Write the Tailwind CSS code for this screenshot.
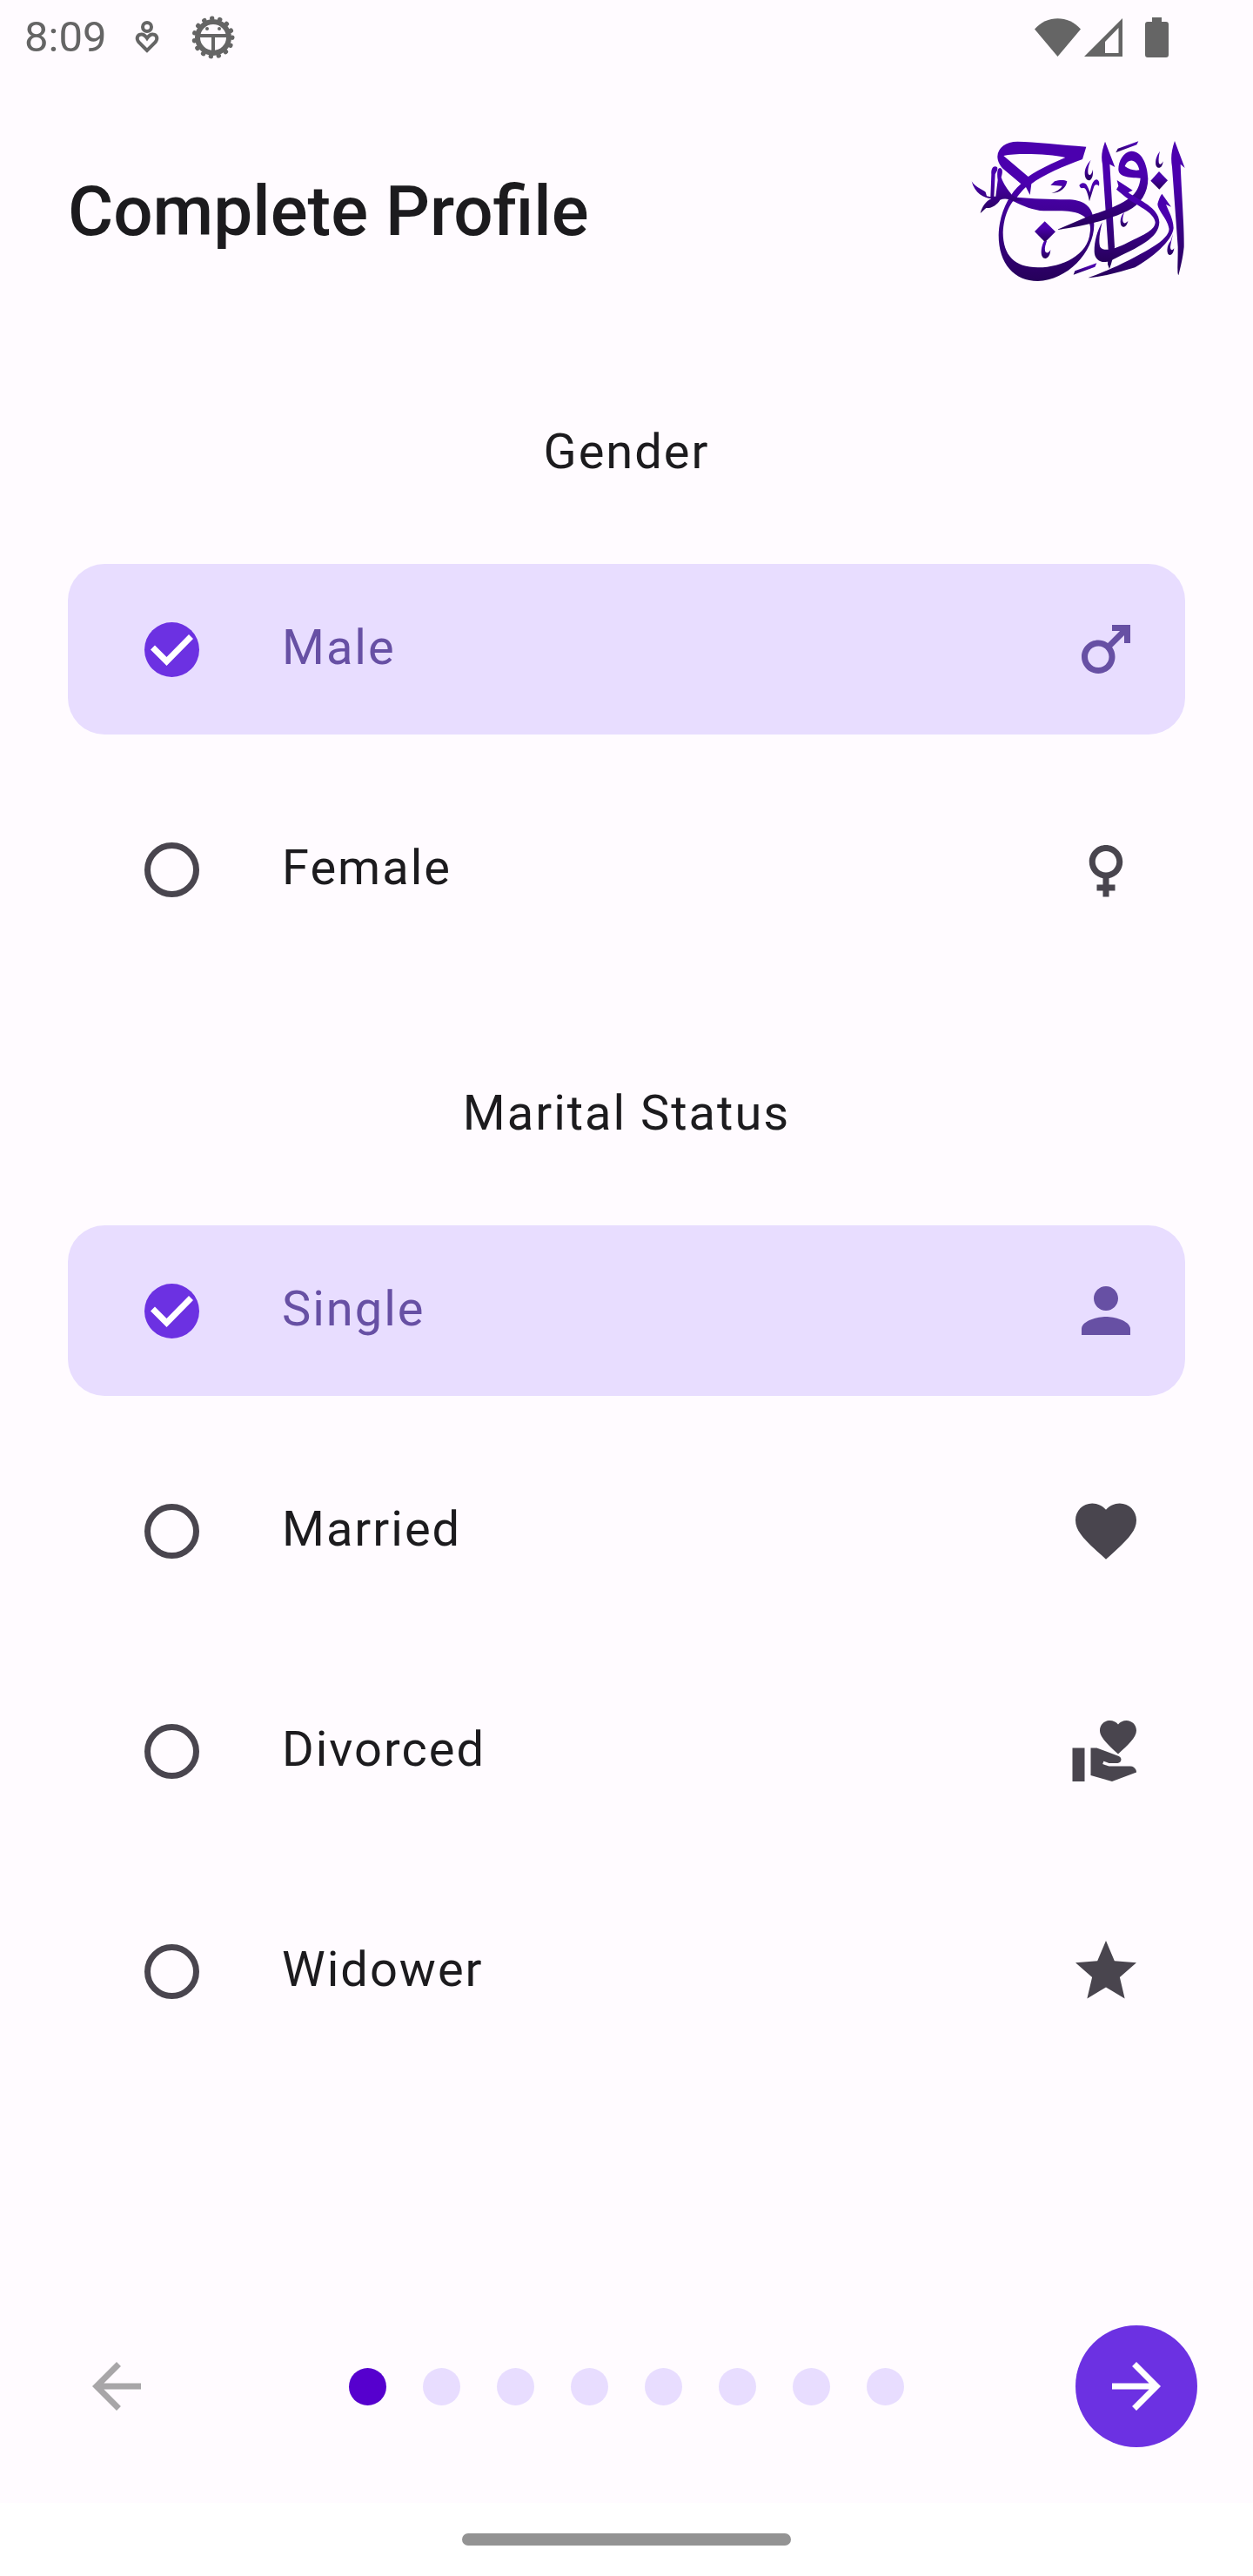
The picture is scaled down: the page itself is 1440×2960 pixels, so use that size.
<!DOCTYPE html>
<html lang="en">
<head>
<meta charset="utf-8">
<meta name="viewport" content="width=device-width, initial-scale=1">
<title>Complete Profile</title>
<script src="https://cdn.jsdelivr.net/npm/@tailwindcss/browser@4"></script>
</head>
<body class="flex min-h-screen flex-col bg-[#fffbff] font-[Roboto,sans-serif] text-[#1c1b1e]">

<!-- System status bar -->
<div class="flex h-[86px] items-center pr-[97px] pl-7 text-[#656565]">
  <span class="text-[49px] leading-[56px]">8:09</span>
  <svg class="ml-8 h-[42px] w-[30px]" viewBox="0 0 30 42" fill="none" stroke="currentColor" stroke-width="4" aria-hidden="true">
    <circle cx="15" cy="9" r="5"/>
    <path d="M15 36L5.500 26.500C2 22 4 18 8 17.500C11 17 13 19 15 22C17 19 19 17 22 17.500C26 18 28 22 24.500 26.500Z"/>
  </svg>
  <svg class="ml-9 size-[50px]" viewBox="0 0 50 50" aria-hidden="true">
    <circle cx="25" cy="25" r="18" fill="none" stroke="currentColor" stroke-width="6"/>
    <circle cx="25" cy="25" r="22" fill="none" stroke="currentColor" stroke-width="5" stroke-linecap="round" stroke-dasharray="0.500 8.715"/>
    <path d="M9 23h32M25 23v18" stroke="currentColor" stroke-width="4"/>
    <circle cx="18" cy="15" r="2" fill="currentColor"/><circle cx="32" cy="15" r="2" fill="currentColor"/>
  </svg>
  <svg class="ml-auto h-11 w-[53px]" viewBox="0 0 53 44" fill="currentColor" aria-hidden="true"><path d="M26.500 44L0 12.500C14-4 39-4 53 12.500Z"/></svg>
  <svg class="ml-1 size-11" viewBox="0 0 44 44" fill="currentColor" fill-rule="evenodd" aria-hidden="true"><path d="M44 0V44H0ZM39.500 11L24 27V40H39.500Z"/></svg>
  <svg class="ml-[26px] h-[46px] w-[27px]" viewBox="0 0 27 46" fill="currentColor" aria-hidden="true"><path d="M8 0H19V5H24Q27 5 27 8V43Q27 46 24 46H3Q0 46 0 43V8Q0 5 3 5H8Z"/></svg>
</div>

<header class="flex items-center justify-between px-[78px] pt-[76px]">
  <h1 class="text-[80px] leading-[96px] font-medium">Complete Profile</h1>
  <svg class="h-[162px] w-[246px]" viewBox="20 35 738 486" role="img" aria-label="ازدواج" fill="url(#ink)" fill-rule="evenodd">
    <defs><linearGradient id="ink" x1="0" y1="0" x2="0" y2="1"><stop offset="0.300" stop-color="#4b00ae"/><stop offset="1" stop-color="#26005a"/></linearGradient></defs>
    <!-- jeem with its bowl -->
    <path d="M417 55C330 48 240 38 180 37C140 37 112 58 111 88C111 105 120 122 135 135L192 183C148 220 116 290 115 360C115 460 170 518 250 518C350 515 443 420 444 325C443 260 410 237 350 237C290 236 230 234 178 229C188 216 198 204 209 194L223 221L228 183C270 150 340 122 404 98ZM132 86C180 76 290 80 345 92C300 112 255 132 217 158ZM165 242C200 260 235 274 270 276C310 277 340 275 365 279C420 287 436 318 430 350C424 430 330 472 250 471C170 470 130 430 130 350C132 300 148 265 165 242Z"/>
    <path d="M274 312L311 348L275 384L239 347Z"/>
    <path d="M272 380C260 400 256 440 277 440C288 438 293 425 294 410C288 422 278 424 275 414C273 403 277 392 281 380Z"/>
    <path d="M308 174C325 168 343 169 351 174C348 197 328 214 297 215C315 209 329 200 334 190L294 187Z"/>
    <path d="M433 100C420 115 411 130 412 150C414 170 425 173 431 169C439 163 441 150 440 133C436 152 428 156 424 148C421 135 426 115 433 100Z"/>
    <path d="M393 188C398 178 412 176 418 186C424 196 427 205 430 212C434 190 440 170 452 168C462 170 463 180 461 190C455 185 448 184 444 192C438 210 432 230 428 243C424 222 418 200 410 197C402 196 398 202 393 188Z"/>
    <!-- first alef -->
    <path d="M482 37L516 125L498 115L515 400C512 430 505 455 497 476L491 460L493 410L473 115C468 90 470 70 482 37Z"/>
    <!-- waw and its tail -->
    <path d="M572 70C545 72 528 105 528 132C528 158 560 162 604 163C602 185 594 205 578 222C540 256 470 280 435 290L316 341C400 332 500 305 560 276C604 254 630 215 630 165C628 110 605 68 572 70ZM550 122C562 92 592 98 600 135C585 138 565 134 550 122Z"/>
    <path d="M519 75L526 61L597 36L591 48Z"/>
    <!-- dal -->
    <path d="M523 170L577 205L562 213C600 240 668 265 669 315C668 370 600 400 500 448C470 460 445 445 445 415C445 380 455 345 472 315C465 345 458 380 465 400C480 420 520 405 560 385C620 358 655 340 655 315C650 280 590 258 552 228L521 202L528 190Z"/>
    <path d="M548 280C538 290 531 310 537 325C545 337 557 332 561 310C552 322 545 320 543 310C542 300 545 290 548 280Z"/>
    <!-- zay -->
    <path d="M668 140L698 171L669 202L639 172Z"/>
    <path d="M671 70C660 85 654 100 657 118C664 134 680 130 682 105C676 118 668 118 667 108C666 95 668 82 671 70Z"/>
    <path d="M678 217L710 262L692 254C702 280 716 300 718 335C715 380 640 440 585 471C540 485 480 502 423 507C500 480 580 440 640 404C690 375 706 350 702 335C695 300 663 275 663 252C666 240 670 228 678 217Z"/>
    <path d="M708 380C698 390 693 412 699 424C706 434 718 425 720 405C713 415 707 411 707 400C708 390 712 375 716 355Z"/>
    <!-- last alef -->
    <path d="M722 35L757 128L742 115C745 200 755 330 754 400C750 440 742 470 735 498C730 490 733 470 733 400L713 125C708 95 710 70 722 35Z"/>
    <path d="M373 496L378 483L453 456L447 469Z"/>
    <!-- bird carrying the couple -->
    <path d="M22 174C35 195 60 203 70 211L74 225L87 228L90 150C88 125 100 118 110 125C114 135 105 145 103 150L99 226L105 226L112 170C108 140 112 128 120 128C130 130 129 145 124 160C132 185 148 203 160 220C175 230 190 235 200 240L165 243C150 234 135 231 120 238C110 255 90 268 72 266C65 272 57 280 52 284C58 262 70 243 90 234C65 232 32 215 22 174Z"/>
  </svg>
</header>

<main class="flex flex-1 flex-col gap-[140px] px-[78px] pt-[153px]">
  <fieldset class="flex flex-col gap-[57px]">
    <legend class="mb-[87px] w-full text-center text-[56px] leading-[84px] tracking-[2px]">Gender</legend>

    <label class="flex h-[196px] items-center rounded-[42px] bg-[#e8ddff] pr-[49px] pl-[88px] text-[#6750a4]">
      <span class="grid">
        <input type="radio" name="gender" checked class="col-start-1 row-start-1 size-[63px] appearance-none rounded-full bg-[#6c31e2]">
        <svg class="pointer-events-none col-start-1 row-start-1 size-[63px]" viewBox="0 0 63 63" fill="none" stroke="#fff" stroke-width="7" aria-hidden="true"><path d="M9.500 29L25.500 45L53.500 16.500"/></svg>
      </span>
      <span class="ml-[95px] flex-1 pb-1 text-[56px] leading-[84px] tracking-[2px]">Male</span>
      <svg class="size-[84px]" viewBox="0 0 24 24" fill="currentColor" aria-hidden="true"><path d="M9.500 11c1.930 0 3.500 1.570 3.500 3.500S11.430 18 9.500 18 6 16.430 6 14.500 7.570 11 9.500 11zm0-2C6.460 9 4 11.460 4 14.500S6.460 20 9.500 20s5.500-2.460 5.500-5.500c0-1.160-.36-2.230-.97-3.120L18 7.420V10h2V4h-6v2h2.580l-3.970 3.970C11.730 9.360 10.660 9 9.500 9z"/></svg>
    </label>

    <label class="flex h-[196px] items-center rounded-[42px] pr-[49px] pl-[88px]">
      <input type="radio" name="gender" class="size-[63px] appearance-none rounded-full border-[7px] border-[#49454e]">
      <span class="ml-[95px] flex-1 pb-1 text-[56px] leading-[84px] tracking-[2px]">Female</span>
      <svg class="size-[84px] text-[#49454e]" viewBox="0 0 24 24" fill="currentColor" aria-hidden="true"><path d="M17.500 9.500C17.500 6.460 15.040 4 12 4S6.500 6.460 6.500 9.500c0 2.700 1.940 4.930 4.500 5.400V17H9v2h2v2h2v-2h2v-2h-2v-2.100c2.560-.47 4.500-2.700 4.500-5.400zm-9 0C8.500 7.570 10.070 6 12 6s3.500 1.570 3.500 3.500S13.930 13 12 13s-3.500-1.570-3.500-3.500z"/></svg>
    </label>
  </fieldset>

  <fieldset class="flex flex-col gap-[57px]">
    <legend class="mb-[87px] w-full text-center text-[56px] leading-[84px] tracking-[2px]">Marital Status</legend>

    <label class="flex h-[196px] items-center rounded-[42px] bg-[#e8ddff] pr-[49px] pl-[88px] text-[#6750a4]">
      <span class="grid">
        <input type="radio" name="marital" checked class="col-start-1 row-start-1 size-[63px] appearance-none rounded-full bg-[#6c31e2]">
        <svg class="pointer-events-none col-start-1 row-start-1 size-[63px]" viewBox="0 0 63 63" fill="none" stroke="#fff" stroke-width="7" aria-hidden="true"><path d="M9.500 29L25.500 45L53.500 16.500"/></svg>
      </span>
      <span class="ml-[95px] flex-1 pb-1 text-[56px] leading-[84px] tracking-[2px]">Single</span>
      <svg class="size-[84px]" viewBox="0 0 24 24" fill="currentColor" aria-hidden="true"><path d="M12 12c2.210 0 4-1.790 4-4s-1.790-4-4-4-4 1.790-4 4 1.790 4 4 4zm0 2c-2.670 0-8 1.340-8 4v2h16v-2c0-2.660-5.330-4-8-4z"/></svg>
    </label>

    <label class="flex h-[196px] items-center rounded-[42px] pr-[49px] pl-[88px]">
      <input type="radio" name="marital" class="size-[63px] appearance-none rounded-full border-[7px] border-[#49454e]">
      <span class="ml-[95px] flex-1 pb-1 text-[56px] leading-[84px] tracking-[2px]">Married</span>
      <svg class="size-[84px] text-[#49454e]" viewBox="0 0 24 24" fill="currentColor" aria-hidden="true"><path d="M12 21.350l-1.450-1.320C5.400 15.360 2 12.280 2 8.500 2 5.420 4.420 3 7.500 3c1.740 0 3.410.81 4.500 2.090C13.090 3.810 14.760 3 16.500 3 19.580 3 22 5.420 22 8.500c0 3.780-3.400 6.860-8.550 11.540L12 21.350z"/></svg>
    </label>

    <label class="flex h-[196px] items-center rounded-[42px] pr-[49px] pl-[88px]">
      <input type="radio" name="marital" class="size-[63px] appearance-none rounded-full border-[7px] border-[#49454e]">
      <span class="ml-[95px] flex-1 pb-1 text-[56px] leading-[84px] tracking-[2px]">Divorced</span>
      <svg class="size-[84px] text-[#49454e]" viewBox="0 0 24 24" fill="currentColor" aria-hidden="true"><path d="M1 11h4v11H1zm15-7.750C16.650 2.490 17.660 2 18.700 2 20.550 2 22 3.450 22 5.300c0 2.270-2.910 4.900-6 7.700-3.090-2.810-6-5.440-6-7.700C10 3.450 11.450 2 13.300 2c1.040 0 2.050.49 2.700 1.250zM20 17h-7l-2.090-.73.33-.94L13 16h2.820c.65 0 1.180-.53 1.180-1.180 0-.49-.31-.93-.77-1.110L8.970 11H7v9.020L14 22l8.010-3c-.01-1.100-.9-2-2.010-2z"/></svg>
    </label>

    <label class="flex h-[196px] items-center rounded-[42px] pr-[49px] pl-[88px]">
      <input type="radio" name="marital" class="size-[63px] appearance-none rounded-full border-[7px] border-[#49454e]">
      <span class="ml-[95px] flex-1 pb-1 text-[56px] leading-[84px] tracking-[2px]">Widower</span>
      <svg class="size-[84px] text-[#49454e]" viewBox="0 0 24 24" fill="currentColor" aria-hidden="true"><path d="M12 17.270L18.180 21l-1.640-7.030L22 9.240l-7.190-.61L12 2 9.190 8.630 2 9.240l5.460 4.730L5.820 21z"/></svg>
    </label>
  </fieldset>
</main>

<!-- Step navigation -->
<nav class="flex items-center justify-between px-16 pb-16" aria-label="Steps">
  <button type="button" disabled aria-label="Back" class="grid size-[140px] place-items-center text-[#a8a6a8]">
    <svg class="size-[84px]" viewBox="0 0 24 24" fill="currentColor" aria-hidden="true"><path d="M20 11H7.830l5.590-5.590L12 4l-8 8 8 8 1.410-1.410L7.830 13H20v-2z"/></svg>
  </button>
  <ol class="flex gap-[42px]">
    <li class="size-[43px] rounded-full bg-[#5600ce]" aria-current="step"></li>
    <li class="size-[43px] rounded-full bg-[#e8ddff]"></li>
    <li class="size-[43px] rounded-full bg-[#e8ddff]"></li>
    <li class="size-[43px] rounded-full bg-[#e8ddff]"></li>
    <li class="size-[43px] rounded-full bg-[#e8ddff]"></li>
    <li class="size-[43px] rounded-full bg-[#e8ddff]"></li>
    <li class="size-[43px] rounded-full bg-[#e8ddff]"></li>
    <li class="size-[43px] rounded-full bg-[#e8ddff]"></li>
  </ol>
  <button type="button" aria-label="Next" class="grid size-[140px] place-items-center rounded-full bg-[#6c31e2] text-white">
    <svg class="size-[84px]" viewBox="0 0 24 24" fill="currentColor" aria-hidden="true"><path d="M12 4l-1.410 1.410L16.170 11H4v2h12.170l-5.580 5.590L12 20l8-8z"/></svg>
  </button>
</nav>

<!-- Gesture bar -->
<div class="flex h-[84px] items-center justify-center bg-white">
  <div class="h-[14px] w-[378px] rounded-full bg-[#939393]"></div>
</div>

</body>
</html>
